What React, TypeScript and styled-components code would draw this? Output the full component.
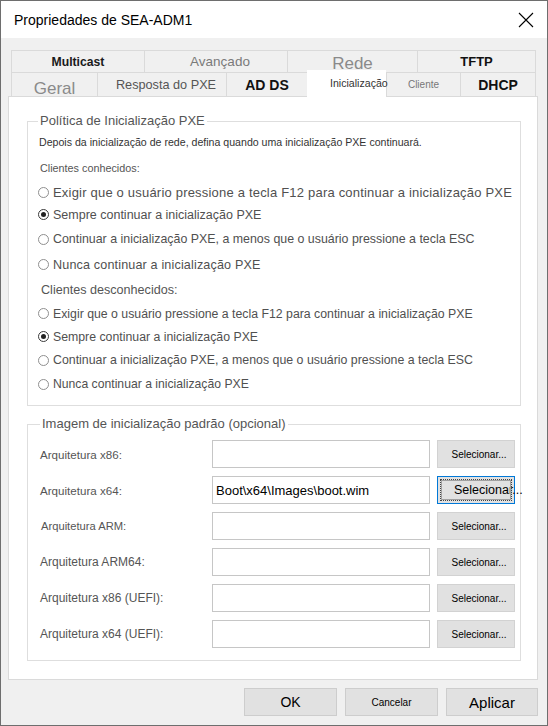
import styled, { createGlobalStyle } from "styled-components";

const GlobalStyle = createGlobalStyle`
  html, body { margin: 0; padding: 0; background: #fff; }
  * { box-sizing: border-box; }
  body { font-family: "Liberation Sans", Arial, sans-serif; }
`;

const Window = styled.div`
  width: 548px;
  height: 726px;
  border: 1px solid #6e6e6e;
  display: flex;
  flex-direction: column;
  background: #f0f0f0;
`;

const TitleBar = styled.div`
  height: 37px;
  flex: none;
  background: #fff;
  display: flex;
  align-items: center;
  justify-content: space-between;
  padding: 0 13px;
  font-size: 14px;
  color: #000;
`;

const Body = styled.div`
  flex: 1;
  display: flex;
  flex-direction: column;
  padding: 12px 9px 0 7px;
`;

const TabStrip = styled.div`
  margin: 0 1px 0 3px;
`;

const TabRow = styled.div<{ $h: number }>`
  display: flex;
  align-items: flex-start;
  height: ${p => p.$h}px;
`;

interface TabLook {
  $w: number;
  $size: number;
  $weight?: number;
  $color: string;
  $dy?: number;
  $dx?: number;
  $raise?: boolean;
}

const Tab = styled.div<TabLook>`
  position: ${p => (p.$raise ? "relative" : "static")};
  z-index: ${p => (p.$raise ? 2 : "auto")};
  width: ${p => p.$w}px;
  height: 100%;
  flex: none;
  display: flex;
  align-items: center;
  justify-content: center;
  padding-top: ${p => p.$dy || 0}px;
  padding-left: ${p => p.$dx || 0}px;
  border-top: 1px solid #dadada;
  border-left: 1px solid #dadada;
  font-size: ${p => p.$size}px;
  font-weight: ${p => p.$weight || 400};
  color: ${p => p.$color};
  white-space: nowrap;
  &:last-child { border-right: 1px solid #dadada; }
`;

const ActiveTab = styled(Tab)`
  position: relative;
  z-index: 1;
  background: #fff;
  height: 27px;
  margin-top: -2px;
  margin-bottom: -1px;
  justify-content: flex-start;
  align-items: flex-start;
  padding-top: 6px;
  padding-left: 22px;
  border-color: #fff;
`;

const Panel = styled.div`
  background: #fff;
  border: 1px solid #dadada;
  padding: 16px 16px 18px 18px;
`;

const Group = styled.fieldset<{ $pad: string; $top?: number }>`
  margin: ${p => p.$top || 0}px 0 0 0;
  padding: ${p => p.$pad};
  border: 1px solid #dedede;
  min-width: 0;
`;

const Legend = styled.legend`
  padding: 0 2px;
  font-size: 13px;
  line-height: 16px;
  color: #555;
`;

const Line = styled.div<{ $h: number; $size: number; $ls?: number; $x?: number; $color?: string }>`
  height: ${p => p.$h}px;
  display: flex;
  align-items: center;
  gap: 4px;
  padding-left: ${p => p.$x || 0}px;
  font-size: ${p => p.$size}px;
  letter-spacing: ${p => p.$ls || 0}px;
  color: ${p => p.$color || "#505050"};
  white-space: nowrap;
`;

const Radio = styled.span<{ $checked?: boolean }>`
  width: 11px;
  height: 11px;
  flex: none;
  border-radius: 50%;
  border: 1px solid ${p => (p.$checked ? "#3a3a3a" : "#8f8f8f")};
  background: #fff;
  display: flex;
  align-items: center;
  justify-content: center;
  &::after {
    content: "";
    width: 5px;
    height: 5px;
    border-radius: 50%;
    background: ${p => (p.$checked ? "#222" : "transparent")};
  }
`;

const Rows = styled.div`
  display: flex;
  flex-direction: column;
  gap: 8px;
  padding-top: 8px;
`;

const ArchRow = styled.div`
  display: grid;
  grid-template-columns: 1fr 218px 78px;
  column-gap: 7px;
  height: 28px;
  align-items: center;
`;

const ArchLabel = styled.span<{ $size: number; $x?: number }>`
  font-size: ${p => p.$size}px;
  padding-left: ${p => p.$x || 0}px;
  color: #555;
  white-space: nowrap;
`;

const PathBox = styled.div`
  height: 28px;
  border: 1px solid #c6c6c6;
  background: #fff;
  padding-left: 3px;
  display: flex;
  align-items: center;
  font-size: 13px;
  color: #000;
  overflow: hidden;
  white-space: nowrap;
`;

const PickButton = styled.button<{ $focus?: boolean }>`
  position: relative;
  height: 28px;
  margin: 0;
  border: 1px solid ${p => (p.$focus ? "#0078d7" : "#d2d2d2")};
  background: #e1e1e1;
  font-family: inherit;
  font-size: ${p => (p.$focus ? 12.5 : 10)}px;
  color: #000;
  display: flex;
  align-items: center;
  justify-content: ${p => (p.$focus ? "flex-start" : "center")};
  padding: 0 0 0 ${p => (p.$focus ? 16 : 6)}px;
  white-space: nowrap;
  overflow: visible;
  &::before {
    content: "";
    display: ${p => (p.$focus ? "block" : "none")};
    position: absolute;
    inset: 2px;
    border: 1px dotted #444;
    box-shadow: inset 0 0 0 1px #a0a0a0;
  }
`;

const Footer = styled.div`
  display: flex;
  justify-content: flex-end;
  gap: 8px;
  margin-top: 8px;
`;

const DialogButton = styled.button<{ $size: number; $w: number }>`
  width: ${p => p.$w}px;
  height: 28px;
  margin: 0;
  border: 1px solid #cdcdcd;
  background: #e1e1e1;
  font-family: inherit;
  font-size: ${p => p.$size}px;
  color: #000;
`;

const known = [
  { text: "Exigir que o usuário pressione a tecla F12 para continuar a inicialização PXE", h: 22, size: 13, ls: 0.2 },
  { text: "Sempre continuar a inicialização PXE", h: 23, size: 12.5, checked: true },
  { text: "Continuar a inicialização PXE, a menos que o usuário pressione a tecla ESC", h: 26, size: 12.4 },
  { text: "Nunca continuar a inicialização PXE", h: 25, size: 12.6, ls: 0.15 },
];

const unknown = [
  { text: "Exigir que o usuário pressione a tecla F12 para continuar a inicialização PXE", h: 23, size: 12.3 },
  { text: "Sempre continuar a inicialização PXE", h: 23, size: 12.3, checked: true },
  { text: "Continuar a inicialização PXE, a menos que o usuário pressione a tecla ESC", h: 24, size: 12.35 },
  { text: "Nunca continuar a inicialização PXE", h: 24, size: 12.2 },
];

const archs = [
  { label: "Arquitetura x86:", size: 11.6 },
  { label: "Arquitetura x64:", size: 11.6, value: "Boot\\x64\\Images\\boot.wim", focus: true },
  { label: "Arquitetura ARM:", size: 11.2, x: 1 },
  { label: "Arquitetura ARM64:", size: 12 },
  { label: "Arquitetura x86 (UEFI):", size: 12, x: -1 },
  { label: "Arquitetura x64 (UEFI):", size: 12, x: -1 },
];

function CloseIcon() {
  return (
    <svg width="16" height="16" viewBox="0 0 16 16">
      <path d="M1 1 L15 15 M15 1 L1 15" stroke="#000" strokeWidth="1.1" fill="none" />
    </svg>
  );
}

export default function App() {
  return (
    <>
      <GlobalStyle />
      <Window>
        <TitleBar>
          <span>Propriedades de SEA-ADM1</span>
          <CloseIcon />
        </TitleBar>
        <Body>
          <TabStrip>
            <TabRow $h={22}>
              <Tab $w={133} $size={12.2} $weight={700} $color="#1a1a1a">Multicast</Tab>
              <Tab $w={143} $size={13.5} $color="#7a7a7a" $dx={8}>Avançado</Tab>
              <Tab $w={130} $size={17} $color="#8a8a8a" $dy={5} $dx={-8} $raise>Rede</Tab>
              <Tab $w={119} $size={13} $weight={700} $color="#111">TFTP</Tab>
            </TabRow>
            <TabRow $h={24}>
              <Tab $w={86} $size={17} $color="#8a8a8a" $dy={8}>Geral</Tab>
              <Tab $w={129} $size={12.7} $color="#555" $dx={8}>Resposta do PXE</Tab>
              <Tab $w={81} $size={14} $weight={700} $color="#111">AD DS</Tab>
              <ActiveTab $w={79} $size={10.6} $color="#333">Inicialização</ActiveTab>
              <Tab $w={74} $size={10} $color="#777" $dx={-4}>Cliente</Tab>
              <Tab $w={76} $size={14} $weight={700} $color="#111">DHCP</Tab>
            </TabRow>
          </TabStrip>
          <Panel>
            <Group $pad="0 10px 9px 10px">
              <Legend>Política de Inicialização PXE</Legend>
              <Line $h={26} $size={10.6} $x={1} $color="#333">
                Depois da inicialização de rede, defina quando uma inicialização PXE continuará.
              </Line>
              <Line $h={26} $size={10.8} $x={2} $color="#555">Clientes conhecidos:</Line>
              {known.map(r => (
                <Line key={r.text} $h={r.h} $size={r.size} $ls={r.ls}>
                  <Radio $checked={r.checked} />
                  {r.text}
                </Line>
              ))}
              <Line $h={25} $size={12.6} $x={3} $color="#555">Clientes desconhecidos:</Line>
              {unknown.map(r => (
                <Line key={r.text + r.h} $h={r.h} $size={r.size}>
                  <Radio $checked={r.checked} />
                  {r.text}
                </Line>
              ))}
            </Group>
            <Group $pad="0 5px 12px 12px" $top={10}>
              <Legend>Imagem de inicialização padrão (opcional)</Legend>
              <Rows>
                {archs.map(a => (
                  <ArchRow key={a.label}>
                    <ArchLabel $size={a.size} $x={a.x}>{a.label}</ArchLabel>
                    <PathBox>{a.value}</PathBox>
                    <PickButton $focus={a.focus}>Selecionar...</PickButton>
                  </ArchRow>
                ))}
              </Rows>
            </Group>
          </Panel>
          <Footer>
            <DialogButton $w={93} $size={14}>OK</DialogButton>
            <DialogButton $w={93} $size={10}>Cancelar</DialogButton>
            <DialogButton $w={92} $size={15}>Aplicar</DialogButton>
          </Footer>
        </Body>
      </Window>
    </>
  );
}
